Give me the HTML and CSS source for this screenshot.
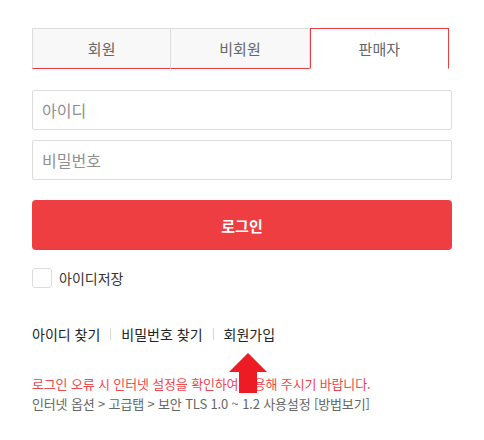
FILE: index.html
```html
<!DOCTYPE html>
<html lang="ko">
<head>
<meta charset="utf-8">
<title>로그인</title>
<meta name="viewport" content="width=device-width,initial-scale=1">
<link rel="stylesheet" href="styles.css">
</head>
<body>

<div class="login">
  <ul class="tabs">
    <li class="tab">회원</li>
    <li class="tab">비회원</li>
    <li class="tab on">판매자</li>
  </ul>

  <form class="form" onsubmit="return false">
    <input class="field" type="text" placeholder="아이디">
    <input class="field" type="password" placeholder="비밀번호">
    <button class="btn-login" type="submit">로그인</button>

    <label class="save">
      <span class="check"></span>
      <span>아이디저장</span>
    </label>
  </form>

  <div class="links">
    <a href="#">아이디 찾기</a>
    <span class="bar"></span>
    <a href="#">비밀번호 찾기</a>
    <span class="bar"></span>
    <a href="#">회원가입</a>
  </div>

  <div class="notice">
    <p class="warn">로그인 오류 시 인터넷 설정을 확인하여 이용해 주시기 바랍니다.</p>
    <p>인터넷 옵션 &gt; 고급탭 &gt; 보안 TLS 1.0 ~ 1.2 사용설정 <a href="#">[방법보기]</a></p>
    <!-- pointer over the join link -->
    <svg class="arrow" viewBox="0 0 38 40"><polygon points="19,0 38,19 28,19 28,40 10,40 10,19 0,19"/></svg>
  </div>
</div>

</body>
</html>
```

FILE: styles.css
```css
:root{--red:#ef3e42;--line:#ddd;--fg:#333}
*{box-sizing:border-box;font-family:"Noto Sans CJK KR","Noto Sans",sans-serif}
body{margin:0;background:#fff;color:var(--fg)}
a{color:inherit;text-decoration:none}
p{margin:0}

.login{width:420px;margin:0 0 0 32px;padding-top:28px}

.tabs{display:flex;list-style:none;margin:0 3px 21px 0;padding:0}
.tab{flex:1;height:41px;line-height:39px;text-align:center;font-size:15px;color:#666;
     background:#f8f8f8;border:1px solid var(--line);border-bottom-color:var(--red)}
.tab + .tab{border-left:0}
.tab.on{background:#fff;border:1px solid var(--red);border-bottom-color:#fff}

.form{display:flex;flex-direction:column}
.field{height:40px;margin:0 0 10px;padding:0 9px;border:1px solid var(--line);border-radius:2px;
       font-size:16px;color:#333;outline:none}
.field::placeholder{color:#8f8f8f}
.btn-login{height:50px;margin-top:10px;border:0;border-radius:4px;background:var(--red);
           color:#fff;font-size:15px;font-weight:700;cursor:pointer}

.save{display:flex;align-items:center;gap:7px;margin-top:18px;font-size:14px;color:#333}
.check{width:20px;height:20px;border:1px solid var(--line);border-radius:3px;background:#fff}

.links{display:flex;align-items:center;margin-top:36px;font-size:14px;line-height:20px;color:#222}
.links .bar{width:1px;height:12px;margin:0 10px;background:#d5d5d5}

.notice{position:relative;margin-top:30px;font-size:13px;letter-spacing:-.15px;line-height:20px;color:#666}
.notice .warn{color:#f0474d}
.arrow{position:absolute;left:197px;top:-21px;width:38px;height:40px;fill:#ed1c24}
```
